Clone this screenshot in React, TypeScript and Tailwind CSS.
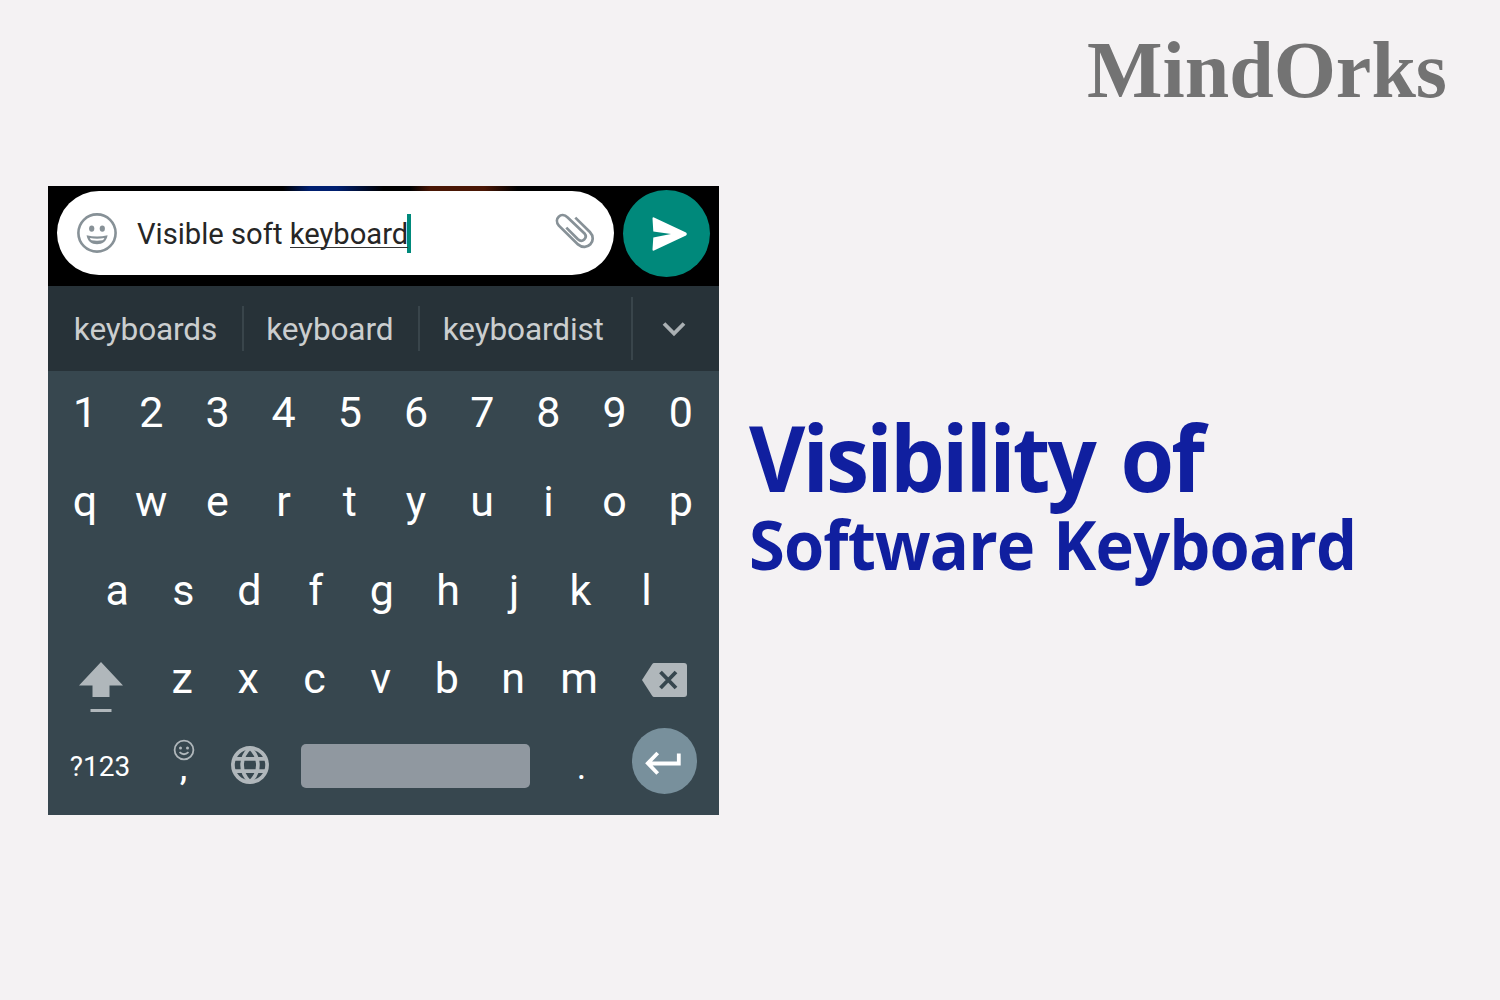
const rowOne = ["1", "2", "3", "4", "5", "6", "7", "8", "9", "0"];
const rowTwo = ["q", "w", "e", "r", "t", "y", "u", "i", "o", "p"];
const rowThree = ["a", "s", "d", "f", "g", "h", "j", "k", "l"];
const rowFour = ["z", "x", "c", "v", "b", "n", "m"];

function Key({ label }: { label: string }) {
  return <div className="w-[66.2px] text-center">{label}</div>;
}

function MessageBar() {
  return (
    <div className="flex h-[100px] items-start bg-black bg-[linear-gradient(90deg,#000_35%,#001f70_39%,#001f70_43%,#000_50%,#000_54%,#4a1705_57%,#4a1705_65%,#000_70%)] bg-[length:100%_5px] bg-no-repeat pl-[9px] pt-[4px]">
      <div className="mt-[1px] flex h-[84px] w-[556.5px] items-center rounded-[42px] bg-white pl-5 pr-[19px]">
        <svg className="size-[40px] shrink-0" viewBox="0 0 40 40" fill="none">
          <circle cx="20" cy="20" r="18.6" stroke="#879197" strokeWidth="2.6" />
          <ellipse cx="14.7" cy="15.6" rx="2.6" ry="3.2" fill="#879197" />
          <ellipse cx="25.3" cy="15.6" rx="2.6" ry="3.2" fill="#879197" />
          <path d="M9.6 22.2Q20 24.8 30.6 22.2C29.8 28 25.5 31.2 20 31.2S10.4 28 9.6 22.2Z" fill="#879197" />
          <path d="M12.8 25.1Q20 26.6 27.4 25.1Q26.8 26.8 25.6 27.3Q20 28.2 14.6 27.3Q13.4 26.8 12.8 25.1Z" fill="#fff" />
        </svg>
        <div className="ml-[20px] flex items-center whitespace-pre text-[29.2px] leading-[40px] text-[#262626]">
          <span className="pt-[2px]">Visible soft </span>
          <span className="relative pt-[2px]">keyboard<span className="absolute inset-x-0 bottom-[6px] h-px bg-[#333]" /></span>
          <span className="-ml-px mt-px h-[39px] w-[4px] bg-[#00897b]" />
        </div>
        <svg className="ml-auto size-[40px]" viewBox="0 0 40 40" fill="none" stroke="#879197" strokeWidth="2.7">
          <path d="M20.3 4.6L34.9 19C43 27.6 32 39 23 31.4L3.9 12.7C-1.8 5.6 6.2-1.6 12.7 4.4L29.5 20.4C33 24.9 27.4 30.2 22.9 26.3L11.3 14.6" />
        </svg>
      </div>
      <div className="ml-[9.5px] flex size-[87px] items-center justify-center rounded-full bg-[#00897b]">
        <svg className="ml-[6px] h-[34px] w-[35px]" viewBox="0 0 35 34" fill="#fff">
          <path d="M2 .4L34 15.6Q35.6 17 34 18.4L2 33.6Q.5 34 .5 32.5L1.3 20.5L19 17L1.3 14.5L.5 1.5Q.5 0 2 .4Z" />
        </svg>
      </div>
    </div>
  );
}

function Suggestions() {
  return (
    <div className="flex h-[85px] items-center bg-[#273238] text-[31.6px] leading-[48px] tracking-[-0.15px] text-[#cbcecf]">
      <div className="w-[194px] pl-px pt-[2px] text-center">keyboards</div>
      <div className="h-[45px] w-[1.5px] bg-[#39454b]" />
      <div className="w-[174.5px] pr-[2px] pt-[2px] text-center">keyboard</div>
      <div className="h-[45px] w-[1.5px] bg-[#39454b]" />
      <div className="w-[211.5px] pr-1 pt-[2px] text-center">keyboardist</div>
      <div className="h-[63px] w-[2px] bg-[#39454b]" />
      <svg className="ml-[29px] mt-px h-[16px] w-[24px]" viewBox="0 0 24 16" fill="none" stroke="#aab0b3" strokeWidth="3.8">
        <path d="M2 2.5L12 12.5L22 2.5" />
      </svg>
    </div>
  );
}

function BottomRow() {
  return (
    <div className="mt-[3px] flex h-[89px] items-start">
      <div className="mt-[25px] w-[104px] text-center text-[28px] leading-[33px]">?123</div>
      <div className="mt-[14px] flex w-[63px] flex-col items-center">
        <svg className="size-[22px]" viewBox="0 0 22 22" fill="none" stroke="#b0b7bb" strokeWidth="1.8">
          <circle cx="11" cy="11" r="9.4" />
          <circle cx="7.5" cy="9" r="1.5" fill="#b0b7bb" stroke="none" />
          <circle cx="14.5" cy="9" r="1.5" fill="#b0b7bb" stroke="none" />
          <path d="M6.5 13.2Q11 17.2 15.5 13.2" />
        </svg>
        <span className="-mt-[13px] text-[34px] font-medium leading-[40px]">,</span>
      </div>
      <svg className="ml-[16px] mt-[21px] size-[38px]" viewBox="0 0 38 38" fill="none" stroke="#b0b7bb" strokeWidth="3.7">
        <circle cx="19" cy="19" r="17.1" />
        <path d="M19 2C8.5 11.5 8.5 26.5 19 36C29.5 26.5 29.5 11.5 19 2ZM3 12.8H35M3 25.2H35" />
      </svg>
      <div className="ml-[32px] mt-[19px] h-[44px] w-[228.5px] rounded-[5px] bg-[#9098a0]" />
      <div className="mt-[21px] w-[102px] pl-[2px] text-center text-[36px] leading-[42px]">.</div>
      <div className="mt-[3px] flex size-[65.5px] items-center justify-center rounded-full bg-[#78909c]">
        <svg className="mr-[2px] mt-[4px] h-[24px] w-[36px]" viewBox="0 0 36 24" fill="none" stroke="#fff" strokeWidth="3.8">
          <path d="M33.8 2.5V12.5H3M12.7 2L2.8 12.2L12.7 22.5" />
        </svg>
      </div>
    </div>
  );
}

function Keyboard() {
  return (
    <div className="h-[443.5px] bg-[#37474f] text-[43px] leading-none text-white">
      <div className="flex h-[82px] items-center pl-[4px]">{rowOne.map((k) => <Key key={k} label={k} />)}</div>
      <div className="mt-[4px] flex h-[89px] items-center pl-[4px]">{rowTwo.map((k) => <Key key={k} label={k} />)}</div>
      <div className="flex h-[88px] items-center pl-[36px]">{rowThree.map((k) => <Key key={k} label={k} />)}</div>
      <div className="flex h-[88px] items-center">
        <svg className="ml-[31px] mr-[26px] mt-[18px] h-[50px] w-[44px] shrink-0" viewBox="0 0 44 50" fill="#b0b7bb">
          <path d="M22 0L44 23.5H30.5V35H13.5V23.5H0ZM11.5 47H32.5V50H11.5Z" />
        </svg>
        {rowFour.map((k) => <Key key={k} label={k} />)}
        <svg className="ml-[30px] mt-[4px] h-[34px] w-[45px] shrink-0" viewBox="0 0 45 34">
          <path d="M12 0H42Q45 0 45 3V31Q45 34 42 34H12Q11 34 10.3 33L0 17L10.3 1Q11 0 12 0Z" fill="#b0b7bb" />
          <path d="M18.5 9L34 25M34 9L18.5 25" stroke="#37474f" strokeWidth="3.8" />
        </svg>
      </div>
      <BottomRow />
    </div>
  );
}

export default function App() {
  return (
    <main className="flex h-[1000px] w-[1500px] flex-col overflow-hidden bg-[#f4f2f3]">
      <header className="flex h-[186px] justify-end pr-[53px] pt-[24px] font-['Liberation_Serif',serif] text-[80px] font-bold leading-[92px] text-[#737373]">
        MindOrks
      </header>
      <div className="flex pl-[48px]">
        <section className="h-[628.5px] w-[670.5px] shrink-0 overflow-hidden font-[Roboto,sans-serif]">
          <MessageBar />
          <Suggestions />
          <Keyboard />
        </section>
        <h1 className="ml-[30px] mt-[221px] whitespace-nowrap font-['Open_Sans',sans-serif] font-bold text-[#101f9f]">
          <span className="block origin-left scale-x-[0.953] text-[91px] leading-[100px] tracking-[-3px] [word-spacing:7px]">Visibility of</span>
          <span className="block origin-left scale-x-[0.956] text-[68px] leading-[74px] tracking-[-0.9px] [word-spacing:3px]">Software Keyboard</span>
        </h1>
      </div>
    </main>
  );
}
